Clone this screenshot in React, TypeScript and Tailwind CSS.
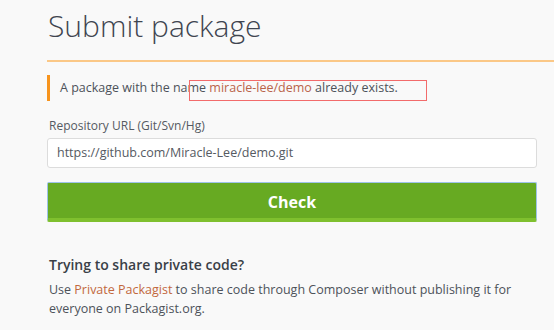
export default function App() {
	return (
		<div className="min-h-screen w-full bg-[#f9f9f9] pl-[47px] text-[#4d525a] [font-family:'Open_Sans',sans-serif]">
			<div className="border-b-2 border-[#fbc887] pt-[4px] pb-[12px]">
				<h1 className="pl-[1px] text-[30px] leading-[44px] font-light text-[#3f4550]">Submit package</h1>
			</div>

			<div className="w-[490px]">
				<div className="relative mt-[13px] flex h-[26px] items-center border-l-[3px] border-[#f7941d] pl-[10px] text-[12.5px]">
					<span>
						A package with the name <span className="text-[#b9644a]">miracle-lee/demo</span> already exists.
					</span>
					<div className="absolute top-[5px] left-[139px] h-[21px] w-[238px] border border-[#f26b6b]" />
				</div>

				<label className="mt-[16px] block pl-[2px] text-[12px] leading-[18px] text-[#555a62]">Repository URL (Git/Svn/Hg)</label>
				<div className="mt-[3px] flex h-[30px] items-center rounded-[3px] border border-[#dcdcdc] bg-white px-[9px] text-[12.5px] text-[#555a62]">
					https://github.com/Miracle-Lee/demo.git
				</div>

				<button className="mt-[14px] flex h-[40px] w-full items-center justify-center rounded-[2px] border border-[#9ec3e8] border-b-[4px] border-b-[#7fc02e] bg-[#67aa22] pt-[2px] text-[16px] font-bold text-white">
					Check
				</button>

				<h3 className="mt-[33px] pl-[2px] text-[14px] leading-[20px] font-semibold text-[#3a3f47]">Trying to share private code?</h3>
				<p className="mt-[5px] pl-[2px] text-[12.5px] leading-[19px] text-[#4d525a]">
					Use <span className="text-[#c2683d]">Private Packagist</span> to share code through Composer without publishing it for everyone on Packagist.org.
				</p>
			</div>
		</div>
	)
}
